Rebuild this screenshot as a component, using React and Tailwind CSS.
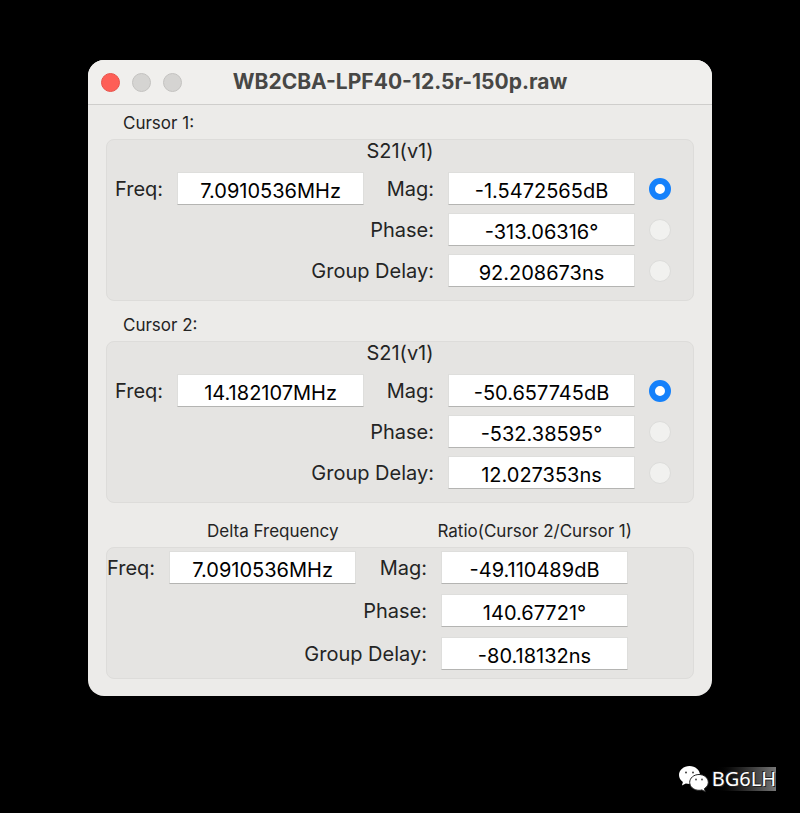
const cursors = [
  {
    id: 'c1',
    title: 'Cursor 1:',
    freq: '7.0910536MHz',
    rows: [
      ['Mag:', '-1.5472565dB'],
      ['Phase:', '-313.06316°'],
      ['Group Delay:', '92.208673ns'],
    ],
  },
  {
    id: 'c2',
    title: 'Cursor 2:',
    freq: '14.182107MHz',
    rows: [
      ['Mag:', '-50.657745dB'],
      ['Phase:', '-532.38595°'],
      ['Group Delay:', '12.027353ns'],
    ],
  },
];

const delta = {
  freq: '7.0910536MHz',
  rows: [
    ['Mag:', '-49.110489dB'],
    ['Phase:', '140.67721°'],
    ['Group Delay:', '-80.18132ns'],
  ],
};

function Field({ id, value }) {
  return (
    <input
      id={id}
      type="text"
      readOnly
      defaultValue={value}
      className="h-[33px] w-full min-w-0 border border-[#dededc] border-b-[#b4b4b2] bg-white pt-1 text-center text-xl leading-6 text-black outline-none"
    />
  );
}

function Radio({ name, label, checked }) {
  return (
    <input
      type="radio"
      name={name}
      aria-label={label}
      defaultChecked={checked}
      className="size-[22px] appearance-none rounded-full border border-[#dcdcda] bg-[#f1f1ef] checked:border-[6px] checked:border-[#1581fb] checked:bg-white"
    />
  );
}

function Readings({ id, freq, rows, selectable, spacing }) {
  return (
    <div className={`grid grid-cols-[auto_187px_1fr_187px_22px] items-center gap-x-3.5 ${spacing}`}>
      {rows.map(([label, value], i) => (
        <div key={label} className="contents">
          {i === 0 && (
            <>
              <label htmlFor={`${id}-freq`}>Freq:</label>
              <Field id={`${id}-freq`} value={freq} />
            </>
          )}
          <label
            htmlFor={`${id}-${i}`}
            className={i === 0 ? 'justify-self-end' : 'col-span-3 justify-self-end'}
          >
            {label}
          </label>
          <Field id={`${id}-${i}`} value={value} />
          {selectable ? <Radio name={id} label={`Show ${label}`} checked={i === 0} /> : <span />}
        </div>
      ))}
    </div>
  );
}

function WeChatLogo() {
  return (
    <svg viewBox="0 0 32 28" className="h-7 w-8" aria-hidden="true">
      <path
        d="M11.5 1C5.700 1 1 5 1 10c0 2.900 1.500 5.300 3.900 7l-1 3.500 3.900-2c1.200.3 2.400.5 3.700.5 5.800 0 10.500-4 10.500-9S17.300 1 11.500 1z"
        fill="#fff"
      />
      <path
        d="M21 9.500c-5.200 0-9.300 3.500-9.300 7.900s4.100 7.900 9.300 7.900c1 0 2-.1 2.900-.4l3.400 1.900-.9-3.200c2.400-1.500 3.900-3.700 3.900-6.200 0-4.400-4.100-7.900-9.300-7.900z"
        fill="#fff"
        stroke="#222"
        strokeWidth="1"
      />
      <g fill="#444">
        <circle cx="8" cy="7.500" r="1" />
        <circle cx="15" cy="7.500" r="1" />
        <circle cx="18" cy="14.500" r="0.900" />
        <circle cx="24" cy="14.500" r="0.900" />
      </g>
    </svg>
  );
}

export default function App() {
  return (
    <div className="min-h-screen bg-black pt-[60px] font-['Inter',sans-serif]">
      <main className="mx-auto w-full max-w-[624px] rounded-2xl bg-[#ecebe9] pb-[17px] text-xl leading-6 text-[#242424]">
        <header className="grid h-[45px] grid-cols-[1fr_auto_1fr] items-center rounded-t-2xl border-b border-[#cfcecc] bg-[#f0efed] px-[13px]">
          <div className="flex gap-3">
            <button type="button" aria-label="Close" className="size-[19px] rounded-full border border-[#e8534b] bg-[#fe5f57]" />
            <button type="button" aria-label="Minimize" className="size-[19px] rounded-full border border-[#c4c3c1] bg-[#d5d4d2]" />
            <button type="button" aria-label="Zoom" className="size-[19px] rounded-full border border-[#c4c3c1] bg-[#d5d4d2]" />
          </div>
          <h1 className="text-[21px] leading-6 font-bold text-[#474745]">WB2CBA-LPF40-12.5r-150p.raw</h1>
        </header>

        <div className="flex flex-col gap-3 px-[18px] pt-1.5">
          {cursors.map((c) => (
            <section key={c.id} aria-labelledby={`${c.id}-title`}>
              <h2 id={`${c.id}-title`} className="mb-1 pl-[17px] text-[17px] leading-6">
                {c.title}
              </h2>
              <div className="rounded-lg border border-[#dddcda] bg-[#e5e4e2] pr-[22px] pb-[13px] pl-2">
                <p className="mb-2.5 pl-[14px] text-center leading-[22px]">S21(v1)</p>
                <Readings id={c.id} freq={c.freq} rows={c.rows} selectable spacing="gap-y-2" />
              </div>
            </section>
          ))}

          <section className="pt-1">
            <div className="mb-1 flex justify-between pr-[62px] pl-[101px] text-[17px] leading-6">
              <h2>Delta Frequency</h2>
              <h2>Ratio(Cursor 2/Cursor 1)</h2>
            </div>
            <div className="rounded-lg border border-[#dddcda] bg-[#e5e4e2] pt-[3px] pr-[29px] pb-2">
              <Readings id="delta" freq={delta.freq} rows={delta.rows} spacing="gap-y-2.5" />
            </div>
          </section>
        </div>
      </main>

      <footer className="mt-[69px] flex items-center justify-end gap-0.5 pr-6">
        <WeChatLogo />
        <span className="bg-linear-to-r from-black to-[#777777] font-['Noto_Sans',sans-serif] text-xl leading-6 text-white [text-shadow:1px_1px_0_#222,-1px_-1px_0_#222]">
          BG6LH
        </span>
      </footer>
    </div>
  );
}
